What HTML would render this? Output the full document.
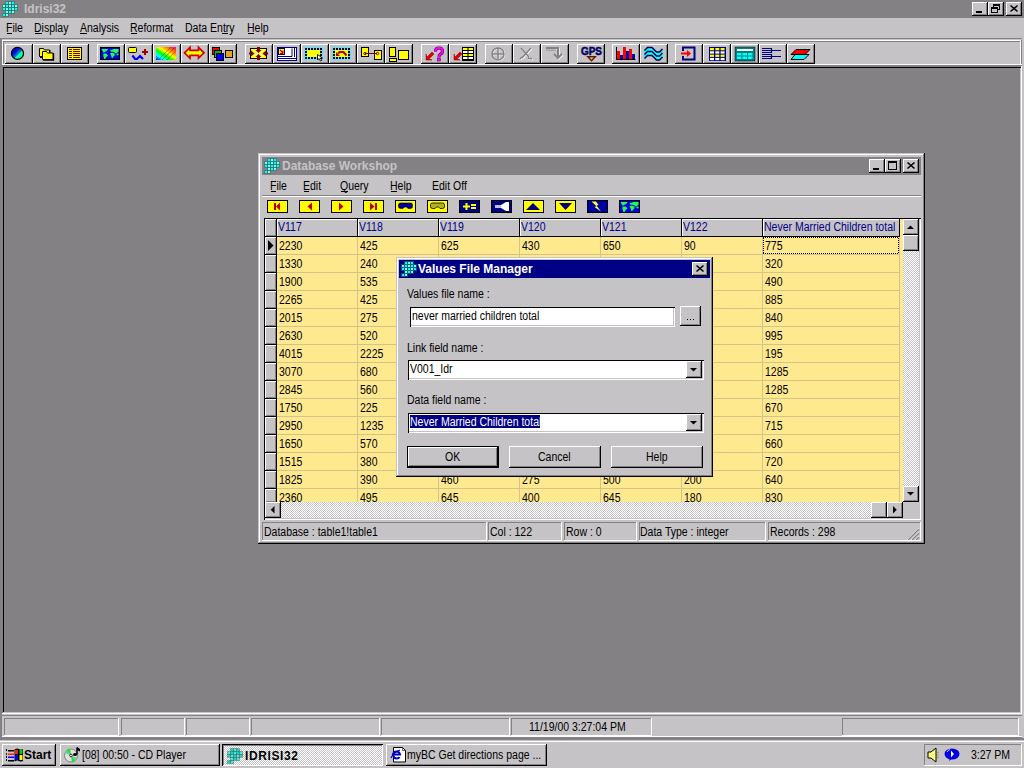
<!DOCTYPE html>
<html><head><meta charset="utf-8"><style>
html,body{margin:0;padding:0;width:1024px;height:768px;overflow:hidden;background:#848184}
body{position:relative}
div,svg{position:absolute}
.t,.tb{font-family:"Liberation Sans",sans-serif;font-size:12px;line-height:13px;white-space:pre;color:#000;transform-origin:0 0}
.tb{font-weight:bold}
</style></head><body>
<div style="left:0px;top:0px;width:1024px;height:768px;background:#848184;"></div>
<div style="left:0px;top:0px;width:1024px;height:18px;background:#848184;"></div>
<div class="tb" style="left:24px;top:3px;color:#c6c3c6;">Idrisi32</div>
<div style="left:972px;top:2px;width:16px;height:14px;background:#c6c3c6;box-shadow:inset -1px -1px #000000,inset 1px 1px #ffffff,inset -2px -2px #848184;"></div>
<div style="left:988px;top:2px;width:16px;height:14px;background:#c6c3c6;box-shadow:inset -1px -1px #000000,inset 1px 1px #ffffff,inset -2px -2px #848184;"></div>
<div style="left:1006px;top:2px;width:16px;height:14px;background:#c6c3c6;box-shadow:inset -1px -1px #000000,inset 1px 1px #ffffff,inset -2px -2px #848184;"></div>
<div style="left:976px;top:11px;width:6px;height:2px;background:#000000;"></div>
<svg style="left:988px;top:2px" width="16" height="14" viewBox="0 0 16 14" shape-rendering="crispEdges"><rect x="3" y="5" width="7" height="6" fill="#c6c3c6"/><path d="M5.5 4.5v-2h6v5h-2" fill="none" stroke="#000"/><rect x="5" y="2" width="7" height="2" fill="#000"/><rect x="3.5" y="5.5" width="6" height="5" fill="none" stroke="#000"/><rect x="3" y="5" width="7" height="2" fill="#000"/></svg>
<svg style="left:1006px;top:2px" width="16" height="14" viewBox="0 0 16 14"><path d="M4.5 3.5l7 6M11.5 3.5l-7 6" stroke="#000" stroke-width="1.6" fill="none"/></svg>
<div style="left:0px;top:18px;width:1024px;height:20px;background:#c6c3c6;"></div>
<div class="t" style="left:6px;top:22px;transform:scaleX(0.875);">File</div>
<div style="left:7px;top:33px;width:5px;height:1px;background:#000000;"></div>
<div class="t" style="left:34px;top:22px;transform:scaleX(0.875);">Display</div>
<div style="left:35px;top:33px;width:7px;height:1px;background:#000000;"></div>
<div class="t" style="left:80px;top:22px;transform:scaleX(0.875);">Analysis</div>
<div style="left:80px;top:33px;width:7px;height:1px;background:#000000;"></div>
<div class="t" style="left:130px;top:22px;transform:scaleX(0.875);">Reformat</div>
<div style="left:131px;top:33px;width:6px;height:1px;background:#000000;"></div>
<div class="t" style="left:185px;top:22px;transform:scaleX(0.875);">Data Entry</div>
<div style="left:222px;top:33px;width:6px;height:1px;background:#000000;"></div>
<div class="t" style="left:247px;top:22px;transform:scaleX(0.875);">Help</div>
<div style="left:248px;top:33px;width:6px;height:1px;background:#000000;"></div>
<div style="left:0px;top:38px;width:1024px;height:1px;background:#848184;"></div>
<div style="left:0px;top:39px;width:1024px;height:1px;background:#c6c3c6;"></div>
<div style="left:0px;top:40px;width:1024px;height:27px;background:#c6c3c6;"></div>
<div style="left:0px;top:38px;width:1px;height:702px;background:#848184;"></div>
<div style="left:1px;top:38px;width:1px;height:702px;background:#848184;"></div>
<div style="left:2px;top:40px;width:1020px;height:1px;background:#ffffff;"></div>
<div style="left:2px;top:40px;width:1px;height:25px;background:#ffffff;"></div>
<div style="left:3px;top:41px;width:1018px;height:1px;background:#848184;"></div>
<div style="left:3px;top:41px;width:1px;height:23px;background:#848184;"></div>
<div style="left:1020px;top:41px;width:1px;height:24px;background:#ffffff;"></div>
<div style="left:1021px;top:40px;width:1px;height:25px;background:#848184;"></div>
<div style="left:2px;top:64px;width:1020px;height:1px;background:#ffffff;"></div>
<div style="left:2px;top:65px;width:1020px;height:1px;background:#848184;"></div>
<div style="left:2px;top:66px;width:1020px;height:1px;background:#848184;"></div>
<div style="left:1022px;top:38px;width:2px;height:702px;background:#c6c3c6;"></div>
<div style="left:5px;top:44px;width:28px;height:20px;background:#c6c3c6;box-shadow:inset -1px -1px #000000,inset 1px 1px #ffffff,inset -2px -2px #848184;"></div>
<div style="left:33px;top:44px;width:28px;height:20px;background:#c6c3c6;box-shadow:inset -1px -1px #000000,inset 1px 1px #ffffff,inset -2px -2px #848184;"></div>
<div style="left:61px;top:44px;width:28px;height:20px;background:#c6c3c6;box-shadow:inset -1px -1px #000000,inset 1px 1px #ffffff,inset -2px -2px #848184;"></div>
<div style="left:97px;top:44px;width:28px;height:20px;background:#c6c3c6;box-shadow:inset -1px -1px #000000,inset 1px 1px #ffffff,inset -2px -2px #848184;"></div>
<div style="left:125px;top:44px;width:28px;height:20px;background:#c6c3c6;box-shadow:inset -1px -1px #000000,inset 1px 1px #ffffff,inset -2px -2px #848184;"></div>
<div style="left:153px;top:44px;width:28px;height:20px;background:#c6c3c6;box-shadow:inset -1px -1px #000000,inset 1px 1px #ffffff,inset -2px -2px #848184;"></div>
<div style="left:181px;top:44px;width:28px;height:20px;background:#c6c3c6;box-shadow:inset -1px -1px #000000,inset 1px 1px #ffffff,inset -2px -2px #848184;"></div>
<div style="left:209px;top:44px;width:28px;height:20px;background:#c6c3c6;box-shadow:inset -1px -1px #000000,inset 1px 1px #ffffff,inset -2px -2px #848184;"></div>
<div style="left:245px;top:44px;width:28px;height:20px;background:#c6c3c6;box-shadow:inset -1px -1px #000000,inset 1px 1px #ffffff,inset -2px -2px #848184;"></div>
<div style="left:273px;top:44px;width:28px;height:20px;background:#c6c3c6;box-shadow:inset -1px -1px #000000,inset 1px 1px #ffffff,inset -2px -2px #848184;"></div>
<div style="left:301px;top:44px;width:28px;height:20px;background:#c6c3c6;box-shadow:inset -1px -1px #000000,inset 1px 1px #ffffff,inset -2px -2px #848184;"></div>
<div style="left:329px;top:44px;width:28px;height:20px;background:#c6c3c6;box-shadow:inset -1px -1px #000000,inset 1px 1px #ffffff,inset -2px -2px #848184;"></div>
<div style="left:357px;top:44px;width:28px;height:20px;background:#c6c3c6;box-shadow:inset -1px -1px #000000,inset 1px 1px #ffffff,inset -2px -2px #848184;"></div>
<div style="left:385px;top:44px;width:28px;height:20px;background:#c6c3c6;box-shadow:inset -1px -1px #000000,inset 1px 1px #ffffff,inset -2px -2px #848184;"></div>
<div style="left:421px;top:44px;width:28px;height:20px;background:#c6c3c6;box-shadow:inset -1px -1px #000000,inset 1px 1px #ffffff,inset -2px -2px #848184;"></div>
<div style="left:449px;top:44px;width:28px;height:20px;background:#c6c3c6;box-shadow:inset -1px -1px #000000,inset 1px 1px #ffffff,inset -2px -2px #848184;"></div>
<div style="left:485px;top:44px;width:28px;height:20px;background:#c6c3c6;box-shadow:inset -1px -1px #000000,inset 1px 1px #ffffff,inset -2px -2px #848184;"></div>
<div style="left:513px;top:44px;width:28px;height:20px;background:#c6c3c6;box-shadow:inset -1px -1px #000000,inset 1px 1px #ffffff,inset -2px -2px #848184;"></div>
<div style="left:541px;top:44px;width:28px;height:20px;background:#c6c3c6;box-shadow:inset -1px -1px #000000,inset 1px 1px #ffffff,inset -2px -2px #848184;"></div>
<div style="left:577px;top:44px;width:28px;height:20px;background:#c6c3c6;box-shadow:inset -1px -1px #000000,inset 1px 1px #ffffff,inset -2px -2px #848184;"></div>
<div style="left:612px;top:44px;width:28px;height:20px;background:#c6c3c6;box-shadow:inset -1px -1px #000000,inset 1px 1px #ffffff,inset -2px -2px #848184;"></div>
<div style="left:640px;top:44px;width:28px;height:20px;background:#c6c3c6;box-shadow:inset -1px -1px #000000,inset 1px 1px #ffffff,inset -2px -2px #848184;"></div>
<div style="left:675px;top:44px;width:28px;height:20px;background:#c6c3c6;box-shadow:inset -1px -1px #000000,inset 1px 1px #ffffff,inset -2px -2px #848184;"></div>
<div style="left:703px;top:44px;width:28px;height:20px;background:#c6c3c6;box-shadow:inset -1px -1px #000000,inset 1px 1px #ffffff,inset -2px -2px #848184;"></div>
<div style="left:731px;top:44px;width:28px;height:20px;background:#c6c3c6;box-shadow:inset -1px -1px #000000,inset 1px 1px #ffffff,inset -2px -2px #848184;"></div>
<div style="left:759px;top:44px;width:28px;height:20px;background:#c6c3c6;box-shadow:inset -1px -1px #000000,inset 1px 1px #ffffff,inset -2px -2px #848184;"></div>
<div style="left:787px;top:44px;width:28px;height:20px;background:#c6c3c6;box-shadow:inset -1px -1px #000000,inset 1px 1px #ffffff,inset -2px -2px #848184;"></div>
<div style="left:2px;top:67px;width:1020px;height:646px;background:#848184;"></div>
<div style="left:3px;top:67px;width:1018px;height:1px;background:#000000;"></div>
<div style="left:3px;top:67px;width:1px;height:646px;background:#000000;"></div>
<div style="left:2px;top:67px;width:1px;height:647px;background:#848184;"></div>
<div style="left:1021px;top:66px;width:1px;height:649px;background:#ffffff;"></div>
<div style="left:1020px;top:68px;width:1px;height:645px;background:#c6c3c6;"></div>
<div style="left:3px;top:712px;width:1018px;height:1px;background:#c6c3c6;"></div>
<div style="left:2px;top:713px;width:1020px;height:1px;background:#ffffff;"></div>
<div style="left:2px;top:714px;width:1020px;height:26px;background:#c6c3c6;"></div>
<div style="left:2px;top:715px;width:1020px;height:1px;background:#848184;"></div>
<div style="left:2px;top:736px;width:1020px;height:1px;background:#ffffff;"></div>
<div style="left:2px;top:737px;width:1020px;height:1px;background:#848184;"></div>
<div style="left:0px;top:738px;width:1024px;height:1px;background:#848184;"></div>
<div style="left:0px;top:739px;width:1024px;height:1px;background:#848184;"></div>
<div style="left:4px;top:718px;width:115px;height:18px;background:#c6c3c6;box-shadow:inset -1px -1px #ffffff,inset 1px 1px #848184;"></div>
<div style="left:121px;top:718px;width:64px;height:18px;background:#c6c3c6;box-shadow:inset -1px -1px #ffffff,inset 1px 1px #848184;"></div>
<div style="left:186px;top:718px;width:64px;height:18px;background:#c6c3c6;box-shadow:inset -1px -1px #ffffff,inset 1px 1px #848184;"></div>
<div style="left:251px;top:718px;width:129px;height:18px;background:#c6c3c6;box-shadow:inset -1px -1px #ffffff,inset 1px 1px #848184;"></div>
<div style="left:381px;top:718px;width:129px;height:18px;background:#c6c3c6;box-shadow:inset -1px -1px #ffffff,inset 1px 1px #848184;"></div>
<div style="left:511px;top:718px;width:141px;height:18px;background:#c6c3c6;box-shadow:inset -1px -1px #ffffff,inset 1px 1px #848184;"></div>
<div style="left:842px;top:718px;width:177px;height:18px;background:#c6c3c6;box-shadow:inset -1px -1px #ffffff,inset 1px 1px #848184;"></div>
<div class="t" style="left:529px;top:721px;transform:scaleX(0.875);">11/19/00 3:27:04 PM</div>
<div style="left:0px;top:740px;width:1024px;height:28px;background:#c6c3c6;"></div>
<div style="left:0px;top:741px;width:1024px;height:1px;background:#ffffff;"></div>
<div style="left:2px;top:744px;width:54px;height:22px;background:#c6c3c6;box-shadow:inset -1px -1px #000000,inset 1px 1px #ffffff,inset -2px -2px #848184;"></div>
<div class="tb" style="left:24px;top:749px;">Start</div>
<div style="left:60px;top:744px;width:160px;height:22px;background:#c6c3c6;box-shadow:inset -1px -1px #000000,inset 1px 1px #ffffff,inset -2px -2px #848184;"></div>
<div class="t" style="left:82px;top:749px;transform:scaleX(0.875);">[08] 00:50 - CD Player</div>
<div style="left:222px;top:744px;width:161px;height:22px;background:#ffffff;background-color:#ffffff;background-image:linear-gradient(45deg,#c6c3c6 25%,transparent 25%,transparent 75%,#c6c3c6 75%),linear-gradient(45deg,#c6c3c6 25%,transparent 25%,transparent 75%,#c6c3c6 75%);background-size:2px 2px;background-position:0 0,1px 1px;box-shadow:inset 1px 1px #000000,inset -1px -1px #ffffff,inset 2px 2px #848184;"></div>
<div class="tb" style="left:245px;top:750px;letter-spacing:.6px;">IDRISI32</div>
<div style="left:386px;top:744px;width:161px;height:22px;background:#c6c3c6;box-shadow:inset -1px -1px #000000,inset 1px 1px #ffffff,inset -2px -2px #848184;"></div>
<div class="t" style="left:407px;top:749px;transform:scaleX(0.875);">myBC Get directions page ...</div>
<div style="left:924px;top:744px;width:98px;height:22px;background:#c6c3c6;box-shadow:inset -1px -1px #ffffff,inset 1px 1px #848184;"></div>
<div class="t" style="left:971px;top:749px;transform:scaleX(0.875);">3:27 PM</div>
<div style="left:258px;top:153px;width:667px;height:391px;background:#c6c3c6;"></div>
<div style="left:259px;top:154px;width:665px;height:1px;background:#ffffff;"></div>
<div style="left:259px;top:154px;width:1px;height:389px;background:#ffffff;"></div>
<div style="left:258px;top:543px;width:667px;height:1px;background:#000000;"></div>
<div style="left:924px;top:153px;width:1px;height:391px;background:#000000;"></div>
<div style="left:259px;top:542px;width:665px;height:1px;background:#848184;"></div>
<div style="left:923px;top:154px;width:1px;height:389px;background:#848184;"></div>
<div style="left:262px;top:157px;width:659px;height:18px;background:#848184;"></div>
<div class="tb" style="left:282px;top:160px;color:#c6c3c6;">Database Workshop</div>
<div style="left:869px;top:159px;width:16px;height:14px;background:#c6c3c6;box-shadow:inset -1px -1px #000000,inset 1px 1px #ffffff,inset -2px -2px #848184;"></div>
<div style="left:885px;top:159px;width:16px;height:14px;background:#c6c3c6;box-shadow:inset -1px -1px #000000,inset 1px 1px #ffffff,inset -2px -2px #848184;"></div>
<div style="left:903px;top:159px;width:16px;height:14px;background:#c6c3c6;box-shadow:inset -1px -1px #000000,inset 1px 1px #ffffff,inset -2px -2px #848184;"></div>
<div style="left:873px;top:168px;width:6px;height:2px;background:#000000;"></div>
<svg style="left:885px;top:159px" width="16" height="14" viewBox="0 0 16 14" shape-rendering="crispEdges"><rect x="3.5" y="2.5" width="8" height="8" fill="none" stroke="#000"/><rect x="3" y="2" width="9" height="2" fill="#000"/></svg>
<svg style="left:903px;top:159px" width="16" height="14" viewBox="0 0 16 14"><path d="M4.5 3.5l7 6M11.5 3.5l-7 6" stroke="#000" stroke-width="1.6" fill="none"/></svg>
<div class="t" style="left:270px;top:180px;transform:scaleX(0.875);">File</div>
<div style="left:271px;top:191px;width:5px;height:1px;background:#000000;"></div>
<div class="t" style="left:303px;top:180px;transform:scaleX(0.875);">Edit</div>
<div style="left:304px;top:191px;width:5px;height:1px;background:#000000;"></div>
<div class="t" style="left:340px;top:180px;transform:scaleX(0.875);">Query</div>
<div style="left:341px;top:191px;width:7px;height:1px;background:#000000;"></div>
<div class="t" style="left:390px;top:180px;transform:scaleX(0.875);">Help</div>
<div style="left:391px;top:191px;width:6px;height:1px;background:#000000;"></div>
<div class="t" style="left:432px;top:180px;transform:scaleX(0.875);">Edit Off</div>
<div style="left:262px;top:195px;width:659px;height:1px;background:#848184;"></div>
<div style="left:262px;top:196px;width:659px;height:1px;background:#ffffff;"></div>
<div style="left:264px;top:218px;width:657px;height:302px;background:#ffe98f;box-shadow:inset 1px 1px #000000,inset -1px -1px #ffffff,inset -2px -2px #c6c3c6;"></div>
<div style="left:265px;top:219px;width:11px;height:17px;background:#c6c3c6;box-shadow:inset 1px 1px #ffffff,inset -1px -1px #848184;"></div>
<div style="left:277px;top:219px;width:80px;height:17px;background:#c6c3c6;box-shadow:inset 1px 1px #ffffff;"></div>
<div style="left:357px;top:219px;width:1px;height:18px;background:#000000;"></div>
<div class="t" style="left:278px;top:221px;transform:scaleX(0.875);color:#000084;">V117</div>
<div style="left:358px;top:219px;width:80px;height:17px;background:#c6c3c6;box-shadow:inset 1px 1px #ffffff;"></div>
<div style="left:438px;top:219px;width:1px;height:18px;background:#000000;"></div>
<div class="t" style="left:359px;top:221px;transform:scaleX(0.875);color:#000084;">V118</div>
<div style="left:439px;top:219px;width:80px;height:17px;background:#c6c3c6;box-shadow:inset 1px 1px #ffffff;"></div>
<div style="left:519px;top:219px;width:1px;height:18px;background:#000000;"></div>
<div class="t" style="left:440px;top:221px;transform:scaleX(0.875);color:#000084;">V119</div>
<div style="left:520px;top:219px;width:80px;height:17px;background:#c6c3c6;box-shadow:inset 1px 1px #ffffff;"></div>
<div style="left:600px;top:219px;width:1px;height:18px;background:#000000;"></div>
<div class="t" style="left:521px;top:221px;transform:scaleX(0.875);color:#000084;">V120</div>
<div style="left:601px;top:219px;width:80px;height:17px;background:#c6c3c6;box-shadow:inset 1px 1px #ffffff;"></div>
<div style="left:681px;top:219px;width:1px;height:18px;background:#000000;"></div>
<div class="t" style="left:602px;top:221px;transform:scaleX(0.875);color:#000084;">V121</div>
<div style="left:682px;top:219px;width:80px;height:17px;background:#c6c3c6;box-shadow:inset 1px 1px #ffffff;"></div>
<div style="left:762px;top:219px;width:1px;height:18px;background:#000000;"></div>
<div class="t" style="left:683px;top:221px;transform:scaleX(0.875);color:#000084;">V122</div>
<div style="left:763px;top:219px;width:136px;height:17px;background:#c6c3c6;box-shadow:inset 1px 1px #ffffff;"></div>
<div style="left:899px;top:219px;width:1px;height:18px;background:#000000;"></div>
<div class="t" style="left:764px;top:221px;transform:scaleX(0.875);color:#000084;">Never Married Children total</div>
<div style="left:276px;top:219px;width:1px;height:283px;background:#000000;"></div>
<div style="left:265px;top:236px;width:635px;height:1px;background:#000000;"></div>
<div style="left:265px;top:237px;width:11px;height:17px;background:#c6c3c6;box-shadow:inset 1px 1px #ffffff,inset -1px -1px #848184;"></div>
<div style="left:265px;top:254px;width:12px;height:1px;background:#000000;"></div>
<div style="left:277px;top:254px;width:622px;height:1px;background:#d6c38c;"></div>
<div class="t" style="left:279px;top:240px;transform:scaleX(0.875);">2230</div>
<div class="t" style="left:360px;top:240px;transform:scaleX(0.875);">425</div>
<div class="t" style="left:441px;top:240px;transform:scaleX(0.875);">625</div>
<div class="t" style="left:522px;top:240px;transform:scaleX(0.875);">430</div>
<div class="t" style="left:603px;top:240px;transform:scaleX(0.875);">650</div>
<div class="t" style="left:684px;top:240px;transform:scaleX(0.875);">90</div>
<div class="t" style="left:765px;top:240px;transform:scaleX(0.875);">775</div>
<div style="left:265px;top:255px;width:11px;height:17px;background:#c6c3c6;box-shadow:inset 1px 1px #ffffff,inset -1px -1px #848184;"></div>
<div style="left:265px;top:272px;width:12px;height:1px;background:#000000;"></div>
<div style="left:277px;top:272px;width:622px;height:1px;background:#d6c38c;"></div>
<div class="t" style="left:279px;top:258px;transform:scaleX(0.875);">1330</div>
<div class="t" style="left:360px;top:258px;transform:scaleX(0.875);">240</div>
<div class="t" style="left:765px;top:258px;transform:scaleX(0.875);">320</div>
<div style="left:265px;top:273px;width:11px;height:17px;background:#c6c3c6;box-shadow:inset 1px 1px #ffffff,inset -1px -1px #848184;"></div>
<div style="left:265px;top:290px;width:12px;height:1px;background:#000000;"></div>
<div style="left:277px;top:290px;width:622px;height:1px;background:#d6c38c;"></div>
<div class="t" style="left:279px;top:276px;transform:scaleX(0.875);">1900</div>
<div class="t" style="left:360px;top:276px;transform:scaleX(0.875);">535</div>
<div class="t" style="left:765px;top:276px;transform:scaleX(0.875);">490</div>
<div style="left:265px;top:291px;width:11px;height:17px;background:#c6c3c6;box-shadow:inset 1px 1px #ffffff,inset -1px -1px #848184;"></div>
<div style="left:265px;top:308px;width:12px;height:1px;background:#000000;"></div>
<div style="left:277px;top:308px;width:622px;height:1px;background:#d6c38c;"></div>
<div class="t" style="left:279px;top:294px;transform:scaleX(0.875);">2265</div>
<div class="t" style="left:360px;top:294px;transform:scaleX(0.875);">425</div>
<div class="t" style="left:765px;top:294px;transform:scaleX(0.875);">885</div>
<div style="left:265px;top:309px;width:11px;height:17px;background:#c6c3c6;box-shadow:inset 1px 1px #ffffff,inset -1px -1px #848184;"></div>
<div style="left:265px;top:326px;width:12px;height:1px;background:#000000;"></div>
<div style="left:277px;top:326px;width:622px;height:1px;background:#d6c38c;"></div>
<div class="t" style="left:279px;top:312px;transform:scaleX(0.875);">2015</div>
<div class="t" style="left:360px;top:312px;transform:scaleX(0.875);">275</div>
<div class="t" style="left:765px;top:312px;transform:scaleX(0.875);">840</div>
<div style="left:265px;top:327px;width:11px;height:17px;background:#c6c3c6;box-shadow:inset 1px 1px #ffffff,inset -1px -1px #848184;"></div>
<div style="left:265px;top:344px;width:12px;height:1px;background:#000000;"></div>
<div style="left:277px;top:344px;width:622px;height:1px;background:#d6c38c;"></div>
<div class="t" style="left:279px;top:330px;transform:scaleX(0.875);">2630</div>
<div class="t" style="left:360px;top:330px;transform:scaleX(0.875);">520</div>
<div class="t" style="left:765px;top:330px;transform:scaleX(0.875);">995</div>
<div style="left:265px;top:345px;width:11px;height:17px;background:#c6c3c6;box-shadow:inset 1px 1px #ffffff,inset -1px -1px #848184;"></div>
<div style="left:265px;top:362px;width:12px;height:1px;background:#000000;"></div>
<div style="left:277px;top:362px;width:622px;height:1px;background:#d6c38c;"></div>
<div class="t" style="left:279px;top:348px;transform:scaleX(0.875);">4015</div>
<div class="t" style="left:360px;top:348px;transform:scaleX(0.875);">2225</div>
<div class="t" style="left:765px;top:348px;transform:scaleX(0.875);">195</div>
<div style="left:265px;top:363px;width:11px;height:17px;background:#c6c3c6;box-shadow:inset 1px 1px #ffffff,inset -1px -1px #848184;"></div>
<div style="left:265px;top:380px;width:12px;height:1px;background:#000000;"></div>
<div style="left:277px;top:380px;width:622px;height:1px;background:#d6c38c;"></div>
<div class="t" style="left:279px;top:366px;transform:scaleX(0.875);">3070</div>
<div class="t" style="left:360px;top:366px;transform:scaleX(0.875);">680</div>
<div class="t" style="left:765px;top:366px;transform:scaleX(0.875);">1285</div>
<div style="left:265px;top:381px;width:11px;height:17px;background:#c6c3c6;box-shadow:inset 1px 1px #ffffff,inset -1px -1px #848184;"></div>
<div style="left:265px;top:398px;width:12px;height:1px;background:#000000;"></div>
<div style="left:277px;top:398px;width:622px;height:1px;background:#d6c38c;"></div>
<div class="t" style="left:279px;top:384px;transform:scaleX(0.875);">2845</div>
<div class="t" style="left:360px;top:384px;transform:scaleX(0.875);">560</div>
<div class="t" style="left:765px;top:384px;transform:scaleX(0.875);">1285</div>
<div style="left:265px;top:399px;width:11px;height:17px;background:#c6c3c6;box-shadow:inset 1px 1px #ffffff,inset -1px -1px #848184;"></div>
<div style="left:265px;top:416px;width:12px;height:1px;background:#000000;"></div>
<div style="left:277px;top:416px;width:622px;height:1px;background:#d6c38c;"></div>
<div class="t" style="left:279px;top:402px;transform:scaleX(0.875);">1750</div>
<div class="t" style="left:360px;top:402px;transform:scaleX(0.875);">225</div>
<div class="t" style="left:765px;top:402px;transform:scaleX(0.875);">670</div>
<div style="left:265px;top:417px;width:11px;height:17px;background:#c6c3c6;box-shadow:inset 1px 1px #ffffff,inset -1px -1px #848184;"></div>
<div style="left:265px;top:434px;width:12px;height:1px;background:#000000;"></div>
<div style="left:277px;top:434px;width:622px;height:1px;background:#d6c38c;"></div>
<div class="t" style="left:279px;top:420px;transform:scaleX(0.875);">2950</div>
<div class="t" style="left:360px;top:420px;transform:scaleX(0.875);">1235</div>
<div class="t" style="left:765px;top:420px;transform:scaleX(0.875);">715</div>
<div style="left:265px;top:435px;width:11px;height:17px;background:#c6c3c6;box-shadow:inset 1px 1px #ffffff,inset -1px -1px #848184;"></div>
<div style="left:265px;top:452px;width:12px;height:1px;background:#000000;"></div>
<div style="left:277px;top:452px;width:622px;height:1px;background:#d6c38c;"></div>
<div class="t" style="left:279px;top:438px;transform:scaleX(0.875);">1650</div>
<div class="t" style="left:360px;top:438px;transform:scaleX(0.875);">570</div>
<div class="t" style="left:765px;top:438px;transform:scaleX(0.875);">660</div>
<div style="left:265px;top:453px;width:11px;height:17px;background:#c6c3c6;box-shadow:inset 1px 1px #ffffff,inset -1px -1px #848184;"></div>
<div style="left:265px;top:470px;width:12px;height:1px;background:#000000;"></div>
<div style="left:277px;top:470px;width:622px;height:1px;background:#d6c38c;"></div>
<div class="t" style="left:279px;top:456px;transform:scaleX(0.875);">1515</div>
<div class="t" style="left:360px;top:456px;transform:scaleX(0.875);">380</div>
<div class="t" style="left:765px;top:456px;transform:scaleX(0.875);">720</div>
<div style="left:265px;top:471px;width:11px;height:17px;background:#c6c3c6;box-shadow:inset 1px 1px #ffffff,inset -1px -1px #848184;"></div>
<div style="left:265px;top:488px;width:12px;height:1px;background:#000000;"></div>
<div style="left:277px;top:488px;width:622px;height:1px;background:#d6c38c;"></div>
<div class="t" style="left:279px;top:474px;transform:scaleX(0.875);">1825</div>
<div class="t" style="left:360px;top:474px;transform:scaleX(0.875);">390</div>
<div class="t" style="left:441px;top:474px;transform:scaleX(0.875);">460</div>
<div class="t" style="left:522px;top:474px;transform:scaleX(0.875);">275</div>
<div class="t" style="left:603px;top:474px;transform:scaleX(0.875);">500</div>
<div class="t" style="left:684px;top:474px;transform:scaleX(0.875);">200</div>
<div class="t" style="left:765px;top:474px;transform:scaleX(0.875);">640</div>
<div style="left:265px;top:489px;width:11px;height:13px;background:#c6c3c6;box-shadow:inset 1px 1px #ffffff,inset -1px -1px #848184;"></div>
<div class="t" style="left:279px;top:492px;transform:scaleX(0.875);">2360</div>
<div class="t" style="left:360px;top:492px;transform:scaleX(0.875);">495</div>
<div class="t" style="left:441px;top:492px;transform:scaleX(0.875);">645</div>
<div class="t" style="left:522px;top:492px;transform:scaleX(0.875);">400</div>
<div class="t" style="left:603px;top:492px;transform:scaleX(0.875);">645</div>
<div class="t" style="left:684px;top:492px;transform:scaleX(0.875);">180</div>
<div class="t" style="left:765px;top:492px;transform:scaleX(0.875);">830</div>
<div style="left:357px;top:237px;width:1px;height:265px;background:#d6c38c;"></div>
<div style="left:438px;top:237px;width:1px;height:265px;background:#d6c38c;"></div>
<div style="left:519px;top:237px;width:1px;height:265px;background:#d6c38c;"></div>
<div style="left:600px;top:237px;width:1px;height:265px;background:#d6c38c;"></div>
<div style="left:681px;top:237px;width:1px;height:265px;background:#d6c38c;"></div>
<div style="left:762px;top:237px;width:1px;height:265px;background:#d6c38c;"></div>
<div style="left:899px;top:237px;width:1px;height:265px;background:#d6c38c;"></div>
<svg style="left:265px;top:237px" width="11" height="17" viewBox="0 0 11 17"><path d="M3 3v11l5.5-5.5z" fill="#000"/></svg>
<div style="left:763px;top:237px;width:136px;height:17px;background:transparent;background-image:linear-gradient(90deg,#000 50%,transparent 50%),linear-gradient(90deg,#000 50%,transparent 50%),linear-gradient(0deg,#000 50%,transparent 50%),linear-gradient(0deg,#000 50%,transparent 50%);background-size:2px 1px,2px 1px,1px 2px,1px 2px;background-repeat:repeat-x,repeat-x,repeat-y,repeat-y;background-position:0 0,0 100%,0 0,100% 0;"></div>
<div style="left:903px;top:219px;width:16px;height:283px;background:#ffffff;background-color:#ffffff;background-image:linear-gradient(45deg,#c6c3c6 25%,transparent 25%,transparent 75%,#c6c3c6 75%),linear-gradient(45deg,#c6c3c6 25%,transparent 25%,transparent 75%,#c6c3c6 75%);background-size:2px 2px;background-position:0 0,1px 1px;"></div>
<div style="left:903px;top:219px;width:16px;height:16px;background:#c6c3c6;box-shadow:inset -1px -1px #000000,inset 1px 1px #ffffff,inset -2px -2px #848184;"></div>
<div style="left:903px;top:235px;width:16px;height:16px;background:#c6c3c6;box-shadow:inset -1px -1px #000000,inset 1px 1px #ffffff,inset -2px -2px #848184;"></div>
<div style="left:903px;top:486px;width:16px;height:16px;background:#c6c3c6;box-shadow:inset -1px -1px #000000,inset 1px 1px #ffffff,inset -2px -2px #848184;"></div>
<svg style="left:903px;top:219px" width="16" height="16" viewBox="0 0 16 16"><path d="M4 10h7l-3.5-3.5z" fill="#000"/></svg>
<svg style="left:903px;top:486px" width="16" height="16" viewBox="0 0 16 16"><path d="M4 6h7l-3.5 3.5z" fill="#000"/></svg>
<div style="left:265px;top:502px;width:638px;height:16px;background:#ffffff;background-color:#ffffff;background-image:linear-gradient(45deg,#c6c3c6 25%,transparent 25%,transparent 75%,#c6c3c6 75%),linear-gradient(45deg,#c6c3c6 25%,transparent 25%,transparent 75%,#c6c3c6 75%);background-size:2px 2px;background-position:0 0,1px 1px;"></div>
<div style="left:265px;top:502px;width:16px;height:16px;background:#c6c3c6;box-shadow:inset -1px -1px #000000,inset 1px 1px #ffffff,inset -2px -2px #848184;"></div>
<div style="left:871px;top:502px;width:16px;height:16px;background:#c6c3c6;box-shadow:inset -1px -1px #000000,inset 1px 1px #ffffff,inset -2px -2px #848184;"></div>
<div style="left:887px;top:502px;width:16px;height:16px;background:#c6c3c6;box-shadow:inset -1px -1px #000000,inset 1px 1px #ffffff,inset -2px -2px #848184;"></div>
<svg style="left:265px;top:502px" width="16" height="16" viewBox="0 0 16 16"><path d="M9.5 4v7.5l-3.75-3.75z" fill="#000"/></svg>
<svg style="left:887px;top:502px" width="16" height="16" viewBox="0 0 16 16"><path d="M6 4v7.5l3.75-3.75z" fill="#000"/></svg>
<div style="left:903px;top:502px;width:16px;height:16px;background:#c6c3c6;"></div>
<div style="left:262px;top:522px;width:225px;height:19px;background:#c6c3c6;box-shadow:inset -1px -1px #ffffff,inset 1px 1px #848184;"></div>
<div style="left:488px;top:522px;width:74px;height:19px;background:#c6c3c6;box-shadow:inset -1px -1px #ffffff,inset 1px 1px #848184;"></div>
<div style="left:564px;top:522px;width:73px;height:19px;background:#c6c3c6;box-shadow:inset -1px -1px #ffffff,inset 1px 1px #848184;"></div>
<div style="left:639px;top:522px;width:127px;height:19px;background:#c6c3c6;box-shadow:inset -1px -1px #ffffff,inset 1px 1px #848184;"></div>
<div style="left:768px;top:522px;width:153px;height:19px;background:#c6c3c6;box-shadow:inset -1px -1px #ffffff,inset 1px 1px #848184;"></div>
<div class="t" style="left:264px;top:526px;transform:scaleX(0.875);">Database : table1!table1</div>
<div class="t" style="left:490px;top:526px;transform:scaleX(0.875);">Col : 122</div>
<div class="t" style="left:566px;top:526px;transform:scaleX(0.875);">Row : 0</div>
<div class="t" style="left:640px;top:526px;transform:scaleX(0.875);">Data Type : integer</div>
<div class="t" style="left:770px;top:526px;transform:scaleX(0.875);">Records : 298</div>
<svg style="left:906px;top:527px" width="14" height="13" viewBox="0 0 14 13"><path d="M13 1l-12 12M13 5l-8 8M13 9l-4 4" stroke="#fff" stroke-width="1"/><path d="M13 2l-11 11M13 6l-7 7M13 10l-3 3" stroke="#848184" stroke-width="1.2"/></svg>
<div style="left:396px;top:257px;width:317px;height:220px;background:#c6c3c6;"></div>
<div style="left:397px;top:258px;width:315px;height:1px;background:#ffffff;"></div>
<div style="left:397px;top:258px;width:1px;height:218px;background:#ffffff;"></div>
<div style="left:396px;top:476px;width:317px;height:1px;background:#000000;"></div>
<div style="left:712px;top:257px;width:1px;height:220px;background:#000000;"></div>
<div style="left:397px;top:475px;width:315px;height:1px;background:#848184;"></div>
<div style="left:711px;top:258px;width:1px;height:218px;background:#848184;"></div>
<div style="left:399px;top:260px;width:311px;height:18px;background:#000084;"></div>
<div class="tb" style="left:418px;top:263px;color:#ffffff;">Values File Manager</div>
<div style="left:692px;top:262px;width:16px;height:14px;background:#c6c3c6;box-shadow:inset -1px -1px #000000,inset 1px 1px #ffffff,inset -2px -2px #848184;"></div>
<svg style="left:692px;top:262px" width="16" height="14" viewBox="0 0 16 14"><path d="M4.5 3.5l7 6M11.5 3.5l-7 6" stroke="#000" stroke-width="1.6" fill="none"/></svg>
<div class="t" style="left:407px;top:288px;transform:scaleX(0.875);">Values file name :</div>
<div style="left:410px;top:307px;width:265px;height:20px;background:#ffffff;box-shadow:inset 1px 1px #000000,inset -1px -1px #ffffff,inset -2px -2px #c6c3c6;"></div>
<div class="t" style="left:412px;top:310px;transform:scaleX(0.875);">never married children total</div>
<div style="left:680px;top:306px;width:21px;height:20px;background:#c6c3c6;box-shadow:inset -1px -1px #000000,inset 1px 1px #ffffff,inset -2px -2px #848184;"></div>
<div style="left:687px;top:319px;width:1px;height:1px;background:#000000;"></div>
<div style="left:690px;top:319px;width:1px;height:1px;background:#000000;"></div>
<div style="left:693px;top:319px;width:1px;height:1px;background:#000000;"></div>
<div class="t" style="left:407px;top:342px;transform:scaleX(0.875);">Link field name :</div>
<div style="left:408px;top:360px;width:296px;height:20px;background:#ffffff;box-shadow:inset 1px 1px #000000,inset -1px -1px #ffffff,inset -2px -2px #c6c3c6;"></div>
<div class="t" style="left:410px;top:363px;transform:scaleX(0.875);">V001_Idr</div>
<div style="left:686px;top:361px;width:16px;height:17px;background:#c6c3c6;box-shadow:inset -1px -1px #000000,inset 1px 1px #ffffff,inset -2px -2px #848184;"></div>
<svg style="left:686px;top:361px" width="16" height="17" viewBox="0 0 16 17"><path d="M4 7h7l-3.5 3.5z" fill="#000"/></svg>
<div class="t" style="left:407px;top:394px;transform:scaleX(0.875);">Data field name :</div>
<div style="left:408px;top:413px;width:296px;height:20px;background:#ffffff;box-shadow:inset 1px 1px #000000,inset -1px -1px #ffffff,inset -2px -2px #c6c3c6;"></div>
<div style="left:410px;top:415px;width:130px;height:13px;background:#000084;"></div>
<div class="t" style="left:410px;top:416px;transform:scaleX(0.875);color:#ffffff;">Never Married Children total</div>
<div style="left:686px;top:414px;width:16px;height:17px;background:#c6c3c6;box-shadow:inset -1px -1px #000000,inset 1px 1px #ffffff,inset -2px -2px #848184;"></div>
<svg style="left:686px;top:414px" width="16" height="17" viewBox="0 0 16 17"><path d="M4 7h7l-3.5 3.5z" fill="#000"/></svg>
<div style="left:407px;top:446px;width:92px;height:22px;background:#000000;"></div>
<div style="left:408px;top:447px;width:90px;height:20px;background:#c6c3c6;box-shadow:inset -1px -1px #000000,inset 1px 1px #ffffff,inset -2px -2px #848184;"></div>
<div class="t" style="left:445px;top:451px;transform:scaleX(0.875);">OK</div>
<div style="left:509px;top:446px;width:92px;height:22px;background:#c6c3c6;box-shadow:inset -1px -1px #000000,inset 1px 1px #ffffff,inset -2px -2px #848184;"></div>
<div class="t" style="left:538px;top:451px;transform:scaleX(0.875);">Cancel</div>
<div style="left:611px;top:446px;width:92px;height:22px;background:#c6c3c6;box-shadow:inset -1px -1px #000000,inset 1px 1px #ffffff,inset -2px -2px #848184;"></div>
<div class="t" style="left:646px;top:451px;transform:scaleX(0.875);">Help</div>
<svg style="left:0px;top:0px" width="18" height="17" viewBox="0 0 18 17" shape-rendering="crispEdges"><rect x="5" y="1" width="4" height="4" fill="#207878" opacity=".55"/><rect x="8" y="1" width="4" height="4" fill="#207878" opacity=".55"/><rect x="11" y="1" width="4" height="4" fill="#207878" opacity=".55"/><rect x="2" y="4" width="4" height="4" fill="#207878" opacity=".55"/><rect x="5" y="4" width="4" height="4" fill="#207878" opacity=".55"/><rect x="8" y="4" width="4" height="4" fill="#207878" opacity=".55"/><rect x="11" y="4" width="4" height="4" fill="#207878" opacity=".55"/><rect x="14" y="4" width="4" height="4" fill="#207878" opacity=".55"/><rect x="2" y="7" width="4" height="4" fill="#207878" opacity=".55"/><rect x="5" y="7" width="4" height="4" fill="#207878" opacity=".55"/><rect x="8" y="7" width="4" height="4" fill="#207878" opacity=".55"/><rect x="11" y="7" width="4" height="4" fill="#207878" opacity=".55"/><rect x="14" y="7" width="4" height="4" fill="#207878" opacity=".55"/><rect x="5" y="10" width="4" height="4" fill="#207878" opacity=".55"/><rect x="8" y="10" width="4" height="4" fill="#207878" opacity=".55"/><rect x="11" y="10" width="4" height="4" fill="#207878" opacity=".55"/><rect x="2" y="13" width="4" height="4" fill="#207878" opacity=".55"/><rect x="5" y="13" width="4" height="4" fill="#207878" opacity=".55"/><rect x="6" y="2" width="2" height="2" fill="#00ffff"/><rect x="9" y="2" width="2" height="2" fill="#80ffe0"/><rect x="12" y="2" width="2" height="2" fill="#00ffff"/><rect x="3" y="5" width="2" height="2" fill="#80ffe0"/><rect x="6" y="5" width="2" height="2" fill="#00ffff"/><rect x="9" y="5" width="2" height="2" fill="#80ffe0"/><rect x="12" y="5" width="2" height="2" fill="#00ffff"/><rect x="15" y="5" width="2" height="2" fill="#80ffe0"/><rect x="3" y="8" width="2" height="2" fill="#00ffff"/><rect x="6" y="8" width="2" height="2" fill="#80ffe0"/><rect x="9" y="8" width="2" height="2" fill="#00ffff"/><rect x="12" y="8" width="2" height="2" fill="#80ffe0"/><rect x="15" y="8" width="2" height="2" fill="#00ffff"/><rect x="6" y="11" width="2" height="2" fill="#80ffe0"/><rect x="9" y="11" width="2" height="2" fill="#00ffff"/><rect x="12" y="11" width="2" height="2" fill="#80ffe0"/><rect x="3" y="14" width="2" height="2" fill="#00ffff"/><rect x="6" y="14" width="2" height="2" fill="#80ffe0"/></svg>
<svg style="left:262px;top:157px" width="18" height="17" viewBox="0 0 18 17" shape-rendering="crispEdges"><rect x="5" y="1" width="4" height="4" fill="#207878" opacity=".55"/><rect x="8" y="1" width="4" height="4" fill="#207878" opacity=".55"/><rect x="11" y="1" width="4" height="4" fill="#207878" opacity=".55"/><rect x="2" y="4" width="4" height="4" fill="#207878" opacity=".55"/><rect x="5" y="4" width="4" height="4" fill="#207878" opacity=".55"/><rect x="8" y="4" width="4" height="4" fill="#207878" opacity=".55"/><rect x="11" y="4" width="4" height="4" fill="#207878" opacity=".55"/><rect x="14" y="4" width="4" height="4" fill="#207878" opacity=".55"/><rect x="2" y="7" width="4" height="4" fill="#207878" opacity=".55"/><rect x="5" y="7" width="4" height="4" fill="#207878" opacity=".55"/><rect x="8" y="7" width="4" height="4" fill="#207878" opacity=".55"/><rect x="11" y="7" width="4" height="4" fill="#207878" opacity=".55"/><rect x="14" y="7" width="4" height="4" fill="#207878" opacity=".55"/><rect x="5" y="10" width="4" height="4" fill="#207878" opacity=".55"/><rect x="8" y="10" width="4" height="4" fill="#207878" opacity=".55"/><rect x="11" y="10" width="4" height="4" fill="#207878" opacity=".55"/><rect x="2" y="13" width="4" height="4" fill="#207878" opacity=".55"/><rect x="5" y="13" width="4" height="4" fill="#207878" opacity=".55"/><rect x="6" y="2" width="2" height="2" fill="#00ffff"/><rect x="9" y="2" width="2" height="2" fill="#80ffe0"/><rect x="12" y="2" width="2" height="2" fill="#00ffff"/><rect x="3" y="5" width="2" height="2" fill="#80ffe0"/><rect x="6" y="5" width="2" height="2" fill="#00ffff"/><rect x="9" y="5" width="2" height="2" fill="#80ffe0"/><rect x="12" y="5" width="2" height="2" fill="#00ffff"/><rect x="15" y="5" width="2" height="2" fill="#80ffe0"/><rect x="3" y="8" width="2" height="2" fill="#00ffff"/><rect x="6" y="8" width="2" height="2" fill="#80ffe0"/><rect x="9" y="8" width="2" height="2" fill="#00ffff"/><rect x="12" y="8" width="2" height="2" fill="#80ffe0"/><rect x="15" y="8" width="2" height="2" fill="#00ffff"/><rect x="6" y="11" width="2" height="2" fill="#80ffe0"/><rect x="9" y="11" width="2" height="2" fill="#00ffff"/><rect x="12" y="11" width="2" height="2" fill="#80ffe0"/><rect x="3" y="14" width="2" height="2" fill="#00ffff"/><rect x="6" y="14" width="2" height="2" fill="#80ffe0"/></svg>
<svg style="left:399px;top:260px" width="18" height="17" viewBox="0 0 18 17" shape-rendering="crispEdges"><rect x="5" y="1" width="4" height="4" fill="#207878" opacity=".55"/><rect x="8" y="1" width="4" height="4" fill="#207878" opacity=".55"/><rect x="11" y="1" width="4" height="4" fill="#207878" opacity=".55"/><rect x="2" y="4" width="4" height="4" fill="#207878" opacity=".55"/><rect x="5" y="4" width="4" height="4" fill="#207878" opacity=".55"/><rect x="8" y="4" width="4" height="4" fill="#207878" opacity=".55"/><rect x="11" y="4" width="4" height="4" fill="#207878" opacity=".55"/><rect x="14" y="4" width="4" height="4" fill="#207878" opacity=".55"/><rect x="2" y="7" width="4" height="4" fill="#207878" opacity=".55"/><rect x="5" y="7" width="4" height="4" fill="#207878" opacity=".55"/><rect x="8" y="7" width="4" height="4" fill="#207878" opacity=".55"/><rect x="11" y="7" width="4" height="4" fill="#207878" opacity=".55"/><rect x="14" y="7" width="4" height="4" fill="#207878" opacity=".55"/><rect x="5" y="10" width="4" height="4" fill="#207878" opacity=".55"/><rect x="8" y="10" width="4" height="4" fill="#207878" opacity=".55"/><rect x="11" y="10" width="4" height="4" fill="#207878" opacity=".55"/><rect x="2" y="13" width="4" height="4" fill="#207878" opacity=".55"/><rect x="5" y="13" width="4" height="4" fill="#207878" opacity=".55"/><rect x="6" y="2" width="2" height="2" fill="#00ffff"/><rect x="9" y="2" width="2" height="2" fill="#80ffe0"/><rect x="12" y="2" width="2" height="2" fill="#00ffff"/><rect x="3" y="5" width="2" height="2" fill="#80ffe0"/><rect x="6" y="5" width="2" height="2" fill="#00ffff"/><rect x="9" y="5" width="2" height="2" fill="#80ffe0"/><rect x="12" y="5" width="2" height="2" fill="#00ffff"/><rect x="15" y="5" width="2" height="2" fill="#80ffe0"/><rect x="3" y="8" width="2" height="2" fill="#00ffff"/><rect x="6" y="8" width="2" height="2" fill="#80ffe0"/><rect x="9" y="8" width="2" height="2" fill="#00ffff"/><rect x="12" y="8" width="2" height="2" fill="#80ffe0"/><rect x="15" y="8" width="2" height="2" fill="#00ffff"/><rect x="6" y="11" width="2" height="2" fill="#80ffe0"/><rect x="9" y="11" width="2" height="2" fill="#00ffff"/><rect x="12" y="11" width="2" height="2" fill="#80ffe0"/><rect x="3" y="14" width="2" height="2" fill="#00ffff"/><rect x="6" y="14" width="2" height="2" fill="#80ffe0"/></svg>
<svg style="left:5px;top:44px" width="28" height="20" viewBox="0 0 28 20"><defs><linearGradient id="gg" x1="0" y1="0" x2="1" y2="1"><stop offset="0" stop-color="#0000c0"/><stop offset=".38" stop-color="#0010f0"/><stop offset=".42" stop-color="#0050c0"/><stop offset=".55" stop-color="#008890"/><stop offset=".6" stop-color="#00ffff"/><stop offset=".7" stop-color="#00ffc0"/><stop offset=".8" stop-color="#00ff40"/><stop offset="1" stop-color="#00ff20"/></linearGradient></defs><circle cx="12.5" cy="9.4" r="6" fill="url(#gg)" stroke="#000" stroke-width="1.3"/></svg>
<svg style="left:33px;top:44px" width="28" height="20" viewBox="0 0 28 20"><path d="M6.5 4.5h4l1 1.5h5v6.5h-10z" fill="#ffff00" stroke="#000"/><path d="M17 6v7.5h-10" fill="none" stroke="#000" stroke-width="1"/><path d="M9.5 7.5h4l1 1.5h5.5v6.5h-10.5z" fill="#ffff00" stroke="#000"/><rect x="10" y="15.5" width="11" height="1.2" fill="#000"/><rect x="20" y="9" width="1.2" height="7.5" fill="#000"/></svg>
<svg style="left:61px;top:44px" width="28" height="20" viewBox="0 0 28 20"><rect x="6.5" y="3.5" width="14" height="12" fill="#ffff00" stroke="#000"/><rect x="8" y="5" width="3" height="1" fill="#800000"/><rect x="12" y="5" width="7" height="1" fill="#800000"/><rect x="8" y="7" width="3" height="1" fill="#800000"/><rect x="12" y="7" width="7" height="1" fill="#800000"/><rect x="8" y="9" width="3" height="1" fill="#800000"/><rect x="12" y="9" width="7" height="1" fill="#800000"/><rect x="8" y="11" width="3" height="1" fill="#800000"/><rect x="12" y="11" width="7" height="1" fill="#800000"/><rect x="8" y="13" width="3" height="1" fill="#800000"/><rect x="12" y="13" width="7" height="1" fill="#800000"/></svg>
<svg style="left:97px;top:44px" width="28" height="20" viewBox="0 0 28 20"><rect x="3.5" y="3.5" width="19" height="12" fill="#0000e0" stroke="#000"/><g transform="translate(3.5,4) scale(0.9473684210526315,0.9166666666666666)" fill="#20ff40"><path d="M1 1H8L7 3L5 4L4 5L3 5L2 3Z M3 6H6L8 8L6 10L5 12L4 12L3 9Z M10 2H13L13 1H19V4L18 5L16 6L15 5L13 4L11 4Z M10 6L12 5L15 6L15 8L13 10L13 11L12 11L11 8Z M17 6H19V8H17Z"/></g></svg>
<svg style="left:125px;top:44px" width="28" height="20" viewBox="0 0 28 20"><rect x="3.5" y="3.5" width="8" height="5" rx="1" fill="#ffff00" stroke="#000"/><path d="M7.5 11.5l2.5 3.5h2l3-3l3 3" fill="none" stroke="#0000ff" stroke-width="2.2"/><path d="M19 5h2v2h2v2h-2v2h-2v-2h-2v-2h2z" fill="#a00000"/></svg>
<svg style="left:153px;top:44px" width="28" height="20" viewBox="0 0 28 20"><defs><linearGradient id="rb" x1="0" y1="1" x2="1" y2="0"><stop offset="0" stop-color="#0000ff"/><stop offset=".2" stop-color="#00ffff"/><stop offset=".4" stop-color="#00ff00"/><stop offset=".55" stop-color="#ffff00"/><stop offset=".75" stop-color="#ff8000"/><stop offset="1" stop-color="#ff0000"/></linearGradient></defs><rect x="3" y="3" width="20" height="13" fill="url(#rb)"/><path d="M5 16l13-13M9 16l13-13M14 16l8-8" stroke="#000" stroke-width=".6" opacity=".5"/><path d="M23 3l-3 0l3 3z" fill="#ff00ff"/></svg>
<svg style="left:181px;top:44px" width="28" height="20" viewBox="0 0 28 20"><path d="M3.5 8.8L9 3.3V6.3H17.5V3.3L23 8.8L17.5 14.3V11.3H9V14.3Z" fill="#ffff00" stroke="#d00000" stroke-width="1.7" stroke-linejoin="miter"/></svg>
<svg style="left:209px;top:44px" width="28" height="20" viewBox="0 0 28 20"><rect x="3.5" y="3.5" width="7" height="7" fill="#ff0000" stroke="#000"/><rect x="5.5" y="6.5" width="7" height="7" fill="#00c000" stroke="#000"/><rect x="7.5" y="9.5" width="7" height="7" fill="#0000ff" stroke="#000"/><rect x="16.5" y="6.5" width="7" height="7" fill="#c08040" stroke="#000"/><path d="M17 7h6v6h-6z" fill="#ffc000" opacity=".6"/></svg>
<svg style="left:245px;top:44px" width="28" height="20" viewBox="0 0 28 20"><rect x="5.5" y="4.5" width="16" height="10" fill="#ffff00" stroke="#000"/><path d="M8 6.5l11 6M19 6.5l-11 6" stroke="#ffff80" stroke-width="1.5"/><path d="M12 3h3v3h1.5l-3 3l-3-3h1.5z M12 16h3v-3h1.5l-3-3l-3 3h1.5z M4 8.5v2h2v2l3.5-3l-3.5-3v2z M23 8.5v2h-2v2l-3.5-3l3.5-3v2z" fill="#800000"/></svg>
<svg style="left:273px;top:44px" width="28" height="20" viewBox="0 0 28 20"><rect x="4.5" y="3.5" width="19" height="13" fill="#fff" stroke="#000080"/><path d="M5 14.5h18M5 12.5h14v-8M19 4.5v0" fill="none" stroke="#000080"/><path d="M21.5 4v9" stroke="#000080"/><rect x="5.5" y="4.5" width="6" height="6" fill="#ffff00" stroke="#000080"/><path d="M7 6l3 3M10 6.5v3h-3" stroke="#c00000" stroke-width="1.2" fill="none"/></svg>
<svg style="left:301px;top:44px" width="28" height="20" viewBox="0 0 28 20"><rect x="3" y="3" width="19" height="13" fill="#60e0ff"/><rect x="6" y="6" width="13" height="7" fill="#ffff00"/><rect x="4" y="4" width="2" height="2" fill="#000020"/><rect x="7" y="4" width="2" height="2" fill="#000020"/><rect x="10" y="4" width="2" height="2" fill="#000020"/><rect x="13" y="4" width="2" height="2" fill="#000020"/><rect x="16" y="4" width="2" height="2" fill="#000020"/><rect x="19" y="4" width="2" height="2" fill="#000020"/><rect x="4" y="13" width="2" height="2" fill="#000020"/><rect x="7" y="13" width="2" height="2" fill="#000020"/><rect x="10" y="13" width="2" height="2" fill="#000020"/><rect x="13" y="13" width="2" height="2" fill="#000020"/><rect x="16" y="13" width="2" height="2" fill="#000020"/><rect x="19" y="13" width="2" height="2" fill="#000020"/><rect x="4" y="7" width="2" height="2" fill="#000020"/><rect x="4" y="10" width="2" height="2" fill="#000020"/><rect x="19" y="7" width="2" height="2" fill="#000020"/><rect x="19" y="10" width="2" height="2" fill="#000020"/><path d="M16.5 10.5v5.5l1.5-1.5l1.5 2.5l1.2-.6l-1.3-2.4h2.1z" fill="#fff" stroke="#000" stroke-width=".9"/></svg>
<svg style="left:329px;top:44px" width="28" height="20" viewBox="0 0 28 20"><rect x="3" y="3" width="19" height="13" fill="#60e0ff"/><rect x="6" y="6" width="13" height="7" fill="#ffff00"/><rect x="4" y="4" width="2" height="2" fill="#000020"/><rect x="7" y="4" width="2" height="2" fill="#000020"/><rect x="10" y="4" width="2" height="2" fill="#000020"/><rect x="13" y="4" width="2" height="2" fill="#000020"/><rect x="16" y="4" width="2" height="2" fill="#000020"/><rect x="19" y="4" width="2" height="2" fill="#000020"/><rect x="4" y="13" width="2" height="2" fill="#000020"/><rect x="7" y="13" width="2" height="2" fill="#000020"/><rect x="10" y="13" width="2" height="2" fill="#000020"/><rect x="13" y="13" width="2" height="2" fill="#000020"/><rect x="16" y="13" width="2" height="2" fill="#000020"/><rect x="19" y="13" width="2" height="2" fill="#000020"/><rect x="4" y="7" width="2" height="2" fill="#000020"/><rect x="4" y="10" width="2" height="2" fill="#000020"/><rect x="19" y="7" width="2" height="2" fill="#000020"/><rect x="19" y="10" width="2" height="2" fill="#000020"/><path d="M17.5 11.5l-3-3.5h-4l-1.5 1.5" fill="none" stroke="#b00000" stroke-width="2"/><path d="M7 8v4h4z" fill="#b00000"/></svg>
<svg style="left:357px;top:44px" width="28" height="20" viewBox="0 0 28 20"><rect x="4.5" y="3.5" width="7" height="9" fill="#ffff00" stroke="#000"/><rect x="17.5" y="6.5" width="7" height="9" fill="#ffff00" stroke="#000"/><path d="M8 9.5h12" stroke="#800000"/><circle cx="8" cy="9.5" r="1.2" fill="none" stroke="#800000"/><circle cx="20.5" cy="9.5" r="1.2" fill="none" stroke="#800000"/></svg>
<svg style="left:385px;top:44px" width="28" height="20" viewBox="0 0 28 20"><rect x="4.5" y="3.5" width="6" height="9" fill="#ffff00" stroke="#000"/><rect x="4.5" y="14.5" width="7" height="3" fill="#ffff00" stroke="#000"/><rect x="13.5" y="6.5" width="10" height="9" fill="#ffff00" stroke="#000"/></svg>
<svg style="left:421px;top:44px" width="28" height="20" viewBox="0 0 28 20"><path d="M11 8l-5 5l-1-3v6h6l-3-1l5-5z" fill="#e00000" stroke="#800000" stroke-width=".5"/><path d="M14.5 7.5q0-3.5 3.5-3.5t3.5 3.2q0 1.8-1.8 2.8t-1.7 2.8v.7" fill="none" stroke="#600060" stroke-width="3.2"/><path d="M14.5 7.5q0-3.5 3.5-3.5t3.5 3.2q0 1.8-1.8 2.8t-1.7 2.8v.7" fill="none" stroke="#ff00ff" stroke-width="2"/><rect x="16.5" y="14.5" width="3" height="2.5" fill="#ff00ff" stroke="#600060" stroke-width=".6"/></svg>
<svg style="left:449px;top:44px" width="28" height="20" viewBox="0 0 28 20"><path d="M11 8l-5 5l-1-3v6h6l-3-1l5-5z" fill="#e00000" stroke="#800000" stroke-width=".5"/><rect x="13" y="3" width="12" height="14" fill="#000"/><rect x="14" y="4" width="4.5" height="2" fill="#ffff00"/><rect x="19.5" y="4" width="4.5" height="2" fill="#ffff00"/><rect x="14" y="7" width="4.5" height="2" fill="#ffffe0"/><rect x="19.5" y="7" width="4.5" height="2" fill="#ffffe0"/><rect x="14" y="10" width="4.5" height="2" fill="#ffff00"/><rect x="19.5" y="10" width="4.5" height="2" fill="#ffff00"/><rect x="14" y="13" width="4.5" height="2" fill="#ffffe0"/><rect x="19.5" y="13" width="4.5" height="2" fill="#ffffe0"/></svg>
<svg style="left:485px;top:44px" width="28" height="20" viewBox="0 0 28 20"><circle cx="13.5" cy="10.5" r="6" fill="none" stroke="#fff" stroke-width="1.5"/><path d="M13.5 4.5v12M7.5 10.5h12" stroke="#fff" stroke-width="1.5"/><circle cx="13" cy="10" r="6" fill="none" stroke="#848184" stroke-width="1.5"/><path d="M13 4v12M7 10h12" stroke="#848184" stroke-width="1.5"/></svg>
<svg style="left:513px;top:44px" width="28" height="20" viewBox="0 0 28 20"><path d="M8 4l8 9M18 4l-9 10M7 15l2-2M15 14l4 1" stroke="#fff" stroke-width="1.5" transform="translate(.7,.7)"/><path d="M8 4l8 9M18 4l-9 10M7 15l2-2M15 14l4 1" stroke="#848184" stroke-width="1.5"/></svg>
<svg style="left:541px;top:44px" width="28" height="20" viewBox="0 0 28 20"><path d="M5 4h12v9M13 10l4 4l4-4" fill="none" stroke="#fff" stroke-width="2" transform="translate(.7,.7)"/><path d="M5 4h12v9M13 10l4 4l4-4" fill="none" stroke="#848184" stroke-width="2"/><path d="M5 6h10" stroke="#848184"/></svg>
<svg style="left:577px;top:44px" width="28" height="20" viewBox="0 0 28 20"><text x="4" y="11" font-family="Liberation Sans" font-weight="bold" font-size="10.5" fill="#000060" stroke="#000060" stroke-width=".5" textLength="21" lengthAdjust="spacingAndGlyphs">GPS</text><path d="M10.8 12.8h7.5l-3.75 3.9z" fill="#ffc070" stroke="#601800" stroke-width="1.4" stroke-linejoin="miter"/></svg>
<svg style="left:612px;top:44px" width="28" height="20" viewBox="0 0 28 20"><path d="M4.5 3v12.5h19" fill="none" stroke="#000"/><rect x="5" y="7" width="3" height="8" fill="#ff0000"/><rect x="8" y="11" width="3" height="4" fill="#0000c0"/><rect x="11" y="3" width="3" height="12" fill="#ff0000"/><rect x="14" y="7" width="3" height="8" fill="#0000c0"/><rect x="17" y="5" width="3" height="10" fill="#ff0000"/><rect x="20" y="10" width="3" height="5" fill="#0000c0"/></svg>
<svg style="left:640px;top:44px" width="28" height="20" viewBox="0 0 28 20"><path d="M4.5 8.5L7.5 5.5H12L16.5 10H19.5L22.5 7" fill="none" stroke="#00ffff" stroke-width="2.4"/><path d="M4.5 12.5L7.5 9.5H12L16.5 14H19.5L22.5 11" fill="none" stroke="#00ffff" stroke-width="2.4"/><path d="M4.5 6.5L7.5 3.5H12L16.5 8H19.5L22.5 5" fill="none" stroke="#000050" stroke-width="1.5"/><path d="M4.5 10.5L7.5 7.5H12L16.5 12H19.5L22.5 9" fill="none" stroke="#000050" stroke-width="1.5"/><path d="M4.5 14.5L7.5 11.5H12L16.5 16H19.5L22.5 13" fill="none" stroke="#000050" stroke-width="1.5"/></svg>
<svg style="left:675px;top:44px" width="28" height="20" viewBox="0 0 28 20"><path d="M8 7v-3.5h11.5v12h-11.5v-3.5" fill="none" stroke="#000080" stroke-width="2"/><path d="M6 8.5h6v-2.5l4 3.5l-4 3.5v-2.5h-6z" fill="#ff0000"/></svg>
<svg style="left:703px;top:44px" width="28" height="20" viewBox="0 0 28 20"><rect x="6" y="3" width="17" height="14" fill="#000080"/><rect x="7.0" y="4.0" width="4" height="2.3" fill="#ffff00"/><rect x="12.3" y="4.0" width="4" height="2.3" fill="#ffff00"/><rect x="17.6" y="4.0" width="4" height="2.3" fill="#ffff00"/><rect x="7.0" y="7.3" width="4" height="2.3" fill="#ffffff"/><rect x="12.3" y="7.3" width="4" height="2.3" fill="#ffffff"/><rect x="17.6" y="7.3" width="4" height="2.3" fill="#ffffff"/><rect x="7.0" y="10.6" width="4" height="2.3" fill="#ffff00"/><rect x="12.3" y="10.6" width="4" height="2.3" fill="#ffff00"/><rect x="17.6" y="10.6" width="4" height="2.3" fill="#ffff00"/><rect x="7.0" y="13.899999999999999" width="4" height="2.3" fill="#ffffff"/><rect x="12.3" y="13.899999999999999" width="4" height="2.3" fill="#ffffff"/><rect x="17.6" y="13.899999999999999" width="4" height="2.3" fill="#ffffff"/></svg>
<svg style="left:731px;top:44px" width="28" height="20" viewBox="0 0 28 20"><rect x="4" y="3" width="20" height="14" fill="#008080" stroke="#000" stroke-width=".5"/><rect x="6" y="5" width="16" height="2" fill="#fff"/><rect x="6.0" y="9.0" width="4.5" height="2.5" fill="#00ffff"/><rect x="11.5" y="9.0" width="4.5" height="2.5" fill="#00ffff"/><rect x="17.0" y="9.0" width="4.5" height="2.5" fill="#00ffff"/><rect x="6.0" y="12.5" width="4.5" height="2.5" fill="#00ffff"/><rect x="11.5" y="12.5" width="4.5" height="2.5" fill="#00ffff"/><rect x="17.0" y="12.5" width="4.5" height="2.5" fill="#00ffff"/></svg>
<svg style="left:759px;top:44px" width="28" height="20" viewBox="0 0 28 20"><path d="M3 4.5h9.5v4h-9.5M3 6.5h19M3 10.5h9.5v4h-9.5M3 12.5h19" fill="none" stroke="#000080" stroke-width="1.2"/></svg>
<svg style="left:787px;top:44px" width="28" height="20" viewBox="0 0 28 20"><path d="M8 10.5h14l-5 5h-13z" fill="#00ffff" stroke="#000"/><path d="M9 5.5h14l-5 5h-14z" fill="#ff0000" stroke="#000"/></svg>
<svg style="left:267px;top:200px" width="21" height="13" viewBox="0 0 21 13"><rect x=".5" y=".5" width="20" height="12" fill="#ffff00" stroke="#000"/><rect x="7" y="3" width="2" height="7" fill="#c00000"/><path d="M13 2.5v8l-4-4z" fill="#c00000"/></svg>
<svg style="left:299px;top:200px" width="21" height="13" viewBox="0 0 21 13"><rect x=".5" y=".5" width="20" height="12" fill="#ffff00" stroke="#000"/><path d="M13 2.5v8l-4.5-4z" fill="#c00000"/></svg>
<svg style="left:331px;top:200px" width="21" height="13" viewBox="0 0 21 13"><rect x=".5" y=".5" width="20" height="12" fill="#ffff00" stroke="#000"/><path d="M8 2.5v8l4.5-4z" fill="#c00000"/></svg>
<svg style="left:363px;top:200px" width="21" height="13" viewBox="0 0 21 13"><rect x=".5" y=".5" width="20" height="12" fill="#ffff00" stroke="#000"/><path d="M7 2.5v8l4.5-4z" fill="#c00000"/><rect x="12" y="3" width="2" height="7" fill="#c00000"/></svg>
<svg style="left:395px;top:200px" width="21" height="13" viewBox="0 0 21 13"><rect x=".5" y=".5" width="20" height="12" fill="#ffff00" stroke="#000"/><path d="M3.5 4.5q0-1.5 2-1.5h10q2 0 2 1.5v2q0 2-2 2h-2.5l-1.5-1.5h-2l-1.5 1.5h-2.5q-2 0-2-2z" fill="#0000a0" stroke="#000" stroke-width=".6"/></svg>
<svg style="left:427px;top:200px" width="21" height="13" viewBox="0 0 21 13"><rect x=".5" y=".5" width="20" height="12" fill="#ffff00" stroke="#000"/><path d="M3.5 4.5q0-1.5 2-1.5h10q2 0 2 1.5v2q0 2-2 2h-2.5l-1.5-1.5h-2l-1.5 1.5h-2.5q-2 0-2-2z" fill="#b0b020" stroke="#000" stroke-width=".8"/></svg>
<svg style="left:459px;top:200px" width="21" height="13" viewBox="0 0 21 13"><rect x=".5" y=".5" width="20" height="12" fill="#000080" stroke="#000"/><path d="M4 5.5h2.5v-2.5h2v2.5h2.5v2h-2.5v2.5h-2v-2.5h-2.5z" fill="#ffff00"/><rect x="12" y="4" width="5" height="2" fill="#ffff00"/><rect x="12" y="7" width="5" height="2" fill="#ffff00"/></svg>
<svg style="left:491px;top:200px" width="21" height="13" viewBox="0 0 21 13"><rect x=".5" y=".5" width="20" height="12" fill="#000080" stroke="#000"/><rect x="4" y="5" width="6" height="3" fill="#c0c0e0"/><path d="M10 5l5-3h3v9h-3l-5-3z" fill="#ffffff"/></svg>
<svg style="left:523px;top:200px" width="21" height="13" viewBox="0 0 21 13"><rect x=".5" y=".5" width="20" height="12" fill="#ffff00" stroke="#000"/><path d="M3 10l7-7l7 7z" fill="#000080"/></svg>
<svg style="left:555px;top:200px" width="21" height="13" viewBox="0 0 21 13"><rect x=".5" y=".5" width="20" height="12" fill="#ffff00" stroke="#000"/><path d="M4 3h13l-6.5 7z" fill="#000080"/></svg>
<svg style="left:587px;top:200px" width="21" height="13" viewBox="0 0 21 13"><rect x=".5" y=".5" width="20" height="12" fill="#0000a0" stroke="#000"/><path d="M4.5 1.5h4.5l2.5 3.5l-2 .5l4.5 6l-6.5-4.5l2-.7z" fill="#ffff40"/></svg>
<svg style="left:619px;top:200px" width="21" height="13" viewBox="0 0 21 13"><rect x=".5" y=".5" width="20" height="12" fill="#ffff00" stroke="#000"/><rect x="0.5" y="0.5" width="20" height="12" fill="#0000e0" stroke="#000"/><g transform="translate(0.5,1) scale(1.0,0.9166666666666666)" fill="#20ff40"><path d="M1 1H8L7 3L5 4L4 5L3 5L2 3Z M3 6H6L8 8L6 10L5 12L4 12L3 9Z M10 2H13L13 1H19V4L18 5L16 6L15 5L13 4L11 4Z M10 6L12 5L15 6L15 8L13 10L13 11L12 11L11 8Z M17 6H19V8H17Z"/></g></svg>
<svg style="left:2px;top:744px" width="24" height="22" viewBox="0 0 24 22"><path d="M12.5 5.5q3-1.5 4.5-.5t4 0v12q-2.5 1-4 0t-4.5.5z" fill="#000"/><rect x="13" y="6" width="3" height="4" fill="#ff2000"/><rect x="17.5" y="5.5" width="3" height="4.5" fill="#00d000"/><rect x="13" y="11" width="3" height="5" fill="#0000ff"/><rect x="17.5" y="11" width="3" height="5" fill="#ffff00"/><rect x="4" y="5" width="1" height="2" fill="#000"/><rect x="6" y="6" width="6" height="1.5" fill="#000"/><rect x="4" y="9" width="1" height="2" fill="#800000"/><rect x="6" y="9.5" width="6" height="1.5" fill="#ff2000"/><rect x="4" y="12" width="1" height="2" fill="#000080"/><rect x="6" y="12.5" width="6" height="1.5" fill="#0000ff"/><rect x="4" y="15" width="1" height="2" fill="#000"/><rect x="6" y="16" width="6" height="1.5" fill="#000"/></svg>
<svg style="left:60px;top:744px" width="24" height="22" viewBox="0 0 24 22"><circle cx="11" cy="11.5" r="6.5" fill="#e0e0e0" stroke="#848184"/><path d="M11 11.5L6 6.5A6.5 6.5 0 0 1 10 5.1z M11 11.5L16 16.5A6.5 6.5 0 0 1 12 17.9z" fill="#20e020"/><path d="M11 11.5L5 9A6.5 6.5 0 0 1 7 6z M11 11.5L17 14A6.5 6.5 0 0 1 15 17z" fill="#60d0a0"/><circle cx="11" cy="11.5" r="1.3" fill="#fff" stroke="#000" stroke-width=".8"/><path d="M17 3.5v7" stroke="#000" stroke-width="1.5"/><path d="M17 3l3 2v2.5l-3-1.5z" fill="#000"/><ellipse cx="15" cy="10.5" rx="2" ry="1.6" fill="#000"/></svg>
<svg style="left:225px;top:747px" width="18" height="17" viewBox="0 0 18 17" shape-rendering="crispEdges"><rect x="5" y="1" width="4" height="4" fill="#207878" opacity=".55"/><rect x="8" y="1" width="4" height="4" fill="#207878" opacity=".55"/><rect x="11" y="1" width="4" height="4" fill="#207878" opacity=".55"/><rect x="2" y="4" width="4" height="4" fill="#207878" opacity=".55"/><rect x="5" y="4" width="4" height="4" fill="#207878" opacity=".55"/><rect x="8" y="4" width="4" height="4" fill="#207878" opacity=".55"/><rect x="11" y="4" width="4" height="4" fill="#207878" opacity=".55"/><rect x="14" y="4" width="4" height="4" fill="#207878" opacity=".55"/><rect x="2" y="7" width="4" height="4" fill="#207878" opacity=".55"/><rect x="5" y="7" width="4" height="4" fill="#207878" opacity=".55"/><rect x="8" y="7" width="4" height="4" fill="#207878" opacity=".55"/><rect x="11" y="7" width="4" height="4" fill="#207878" opacity=".55"/><rect x="14" y="7" width="4" height="4" fill="#207878" opacity=".55"/><rect x="5" y="10" width="4" height="4" fill="#207878" opacity=".55"/><rect x="8" y="10" width="4" height="4" fill="#207878" opacity=".55"/><rect x="11" y="10" width="4" height="4" fill="#207878" opacity=".55"/><rect x="2" y="13" width="4" height="4" fill="#207878" opacity=".55"/><rect x="5" y="13" width="4" height="4" fill="#207878" opacity=".55"/><rect x="6" y="2" width="2" height="2" fill="#00e0c0"/><rect x="9" y="2" width="2" height="2" fill="#60e0d0"/><rect x="12" y="2" width="2" height="2" fill="#00e0c0"/><rect x="3" y="5" width="2" height="2" fill="#60e0d0"/><rect x="6" y="5" width="2" height="2" fill="#00e0c0"/><rect x="9" y="5" width="2" height="2" fill="#60e0d0"/><rect x="12" y="5" width="2" height="2" fill="#00e0c0"/><rect x="15" y="5" width="2" height="2" fill="#60e0d0"/><rect x="3" y="8" width="2" height="2" fill="#00e0c0"/><rect x="6" y="8" width="2" height="2" fill="#60e0d0"/><rect x="9" y="8" width="2" height="2" fill="#00e0c0"/><rect x="12" y="8" width="2" height="2" fill="#60e0d0"/><rect x="15" y="8" width="2" height="2" fill="#00e0c0"/><rect x="6" y="11" width="2" height="2" fill="#60e0d0"/><rect x="9" y="11" width="2" height="2" fill="#00e0c0"/><rect x="12" y="11" width="2" height="2" fill="#60e0d0"/><rect x="3" y="14" width="2" height="2" fill="#00e0c0"/><rect x="6" y="14" width="2" height="2" fill="#60e0d0"/></svg>
<svg style="left:386px;top:744px" width="24" height="22" viewBox="0 0 24 22"><path d="M7.5 3.5h9l3 3v11.5h-12z" fill="#fff" stroke="#000"/><path d="M16.5 3.5v3h3" fill="none" stroke="#000" stroke-width=".6"/><path d="M14 10.5h-7q.5-3 3.5-3t3.5 3zM7.5 12q.5 2.5 3 2.5t3-1.5" fill="none" stroke="#0000c0" stroke-width="2"/><path d="M5 14q3-6 9-8" fill="none" stroke="#0000c0" stroke-width="1.2"/></svg>
<svg style="left:924px;top:744px" width="98" height="22" viewBox="0 0 98 22"><path d="M4 8h3l5-4v14l-5-4h-3z" fill="#ffff80" stroke="#000" stroke-width="1"/><path d="M13 9l2-1M13 11h2M13 13l2 1" stroke="#848184" stroke-width=".8"/><ellipse cx="28" cy="10" rx="7.5" ry="5.5" fill="#0000e0"/><path d="M26 14l-1 3l4-3z" fill="#0000e0"/><path d="M27 6.5v7l3-3.5z" fill="#fff"/><path d="M23 8q1-2 3-2.5" stroke="#fff" stroke-width=".8" fill="none"/></svg>
</body></html>
